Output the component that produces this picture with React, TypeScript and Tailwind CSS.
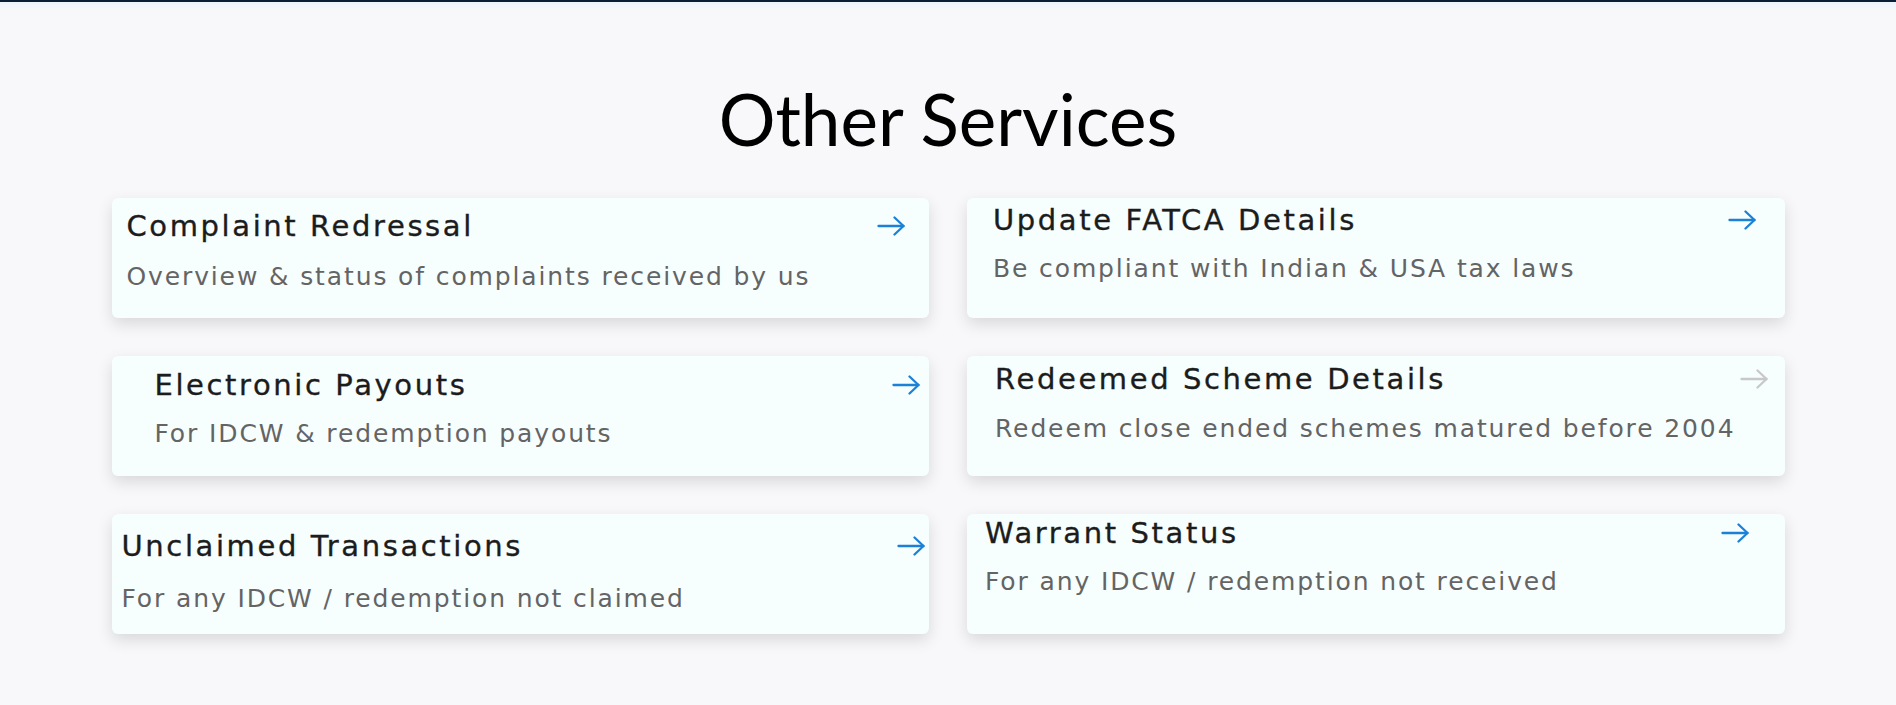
import React from "react";

type Service = {
  title: string;
  text: string;
  box: string; // padding per card, the original is not consistent
  gap: string;
  muted?: boolean;
};

const services: Service[] = [
  {
    title: "Complaint Redressal",
    text: "Overview & status of complaints received by us",
    box: "pt-[12px] pl-[15px] pr-[24px]",
    gap: "mt-[19px]",
  },
  {
    title: "Update FATCA Details",
    text: "Be compliant with Indian & USA tax laws",
    box: "pt-[6px] pl-[26px] pr-[29px]",
    gap: "mt-[17px]",
  },
  {
    title: "Electronic Payouts",
    text: "For IDCW & redemption payouts",
    box: "pt-[13px] pl-[43px] pr-[9px]",
    gap: "mt-[17px]",
  },
  {
    title: "Redeemed Scheme Details",
    text: "Redeem close ended schemes matured before 2004",
    box: "pt-[7px] pl-[28px] pr-[17px]",
    gap: "mt-[18px]",
    muted: true,
  },
  {
    title: "Unclaimed Transactions",
    text: "For any IDCW / redemption not claimed",
    box: "pt-[16px] pl-[10px] pr-[4px]",
    gap: "mt-[21px]",
  },
  {
    title: "Warrant Status",
    text: "For any IDCW / redemption not received",
    box: "pt-[3px] pl-[18px] pr-[36px]",
    gap: "mt-[17px]",
  },
];

const Arrow: React.FC<{ muted?: boolean }> = ({ muted }) => (
  <svg
    width="28"
    height="20"
    viewBox="0 0 28 20"
    fill="none"
    stroke={muted ? "#c8c8c8" : "#1b80d8"}
    strokeWidth="2.3"
    strokeLinecap="round"
    strokeLinejoin="round"
    className="shrink-0"
  >
    <path d="M1.5 10H26.5" />
    <path d="M17.5 1.5L26.5 10L17.5 18.5" />
  </svg>
);

const ServiceCard: React.FC<{ item: Service }> = ({ item }) => (
  <div
    className={`flex h-[120px] cursor-pointer flex-col rounded-md bg-[#f7fefe] shadow-[0_6px_16px_rgba(0,0,0,0.13)] ${item.box}`}
  >
    <div className="flex items-center justify-between">
      <h3 className="font-['DejaVu_Sans',sans-serif] text-[29px] leading-8 tracking-[0.09em] text-[#1c1c1c] [-webkit-text-stroke:0.35px_#1c1c1c]">
        {item.title}
      </h3>
      <Arrow muted={item.muted} />
    </div>
    <p
      className={`font-['DejaVu_Sans',sans-serif] text-[25px] leading-8 tracking-[0.075em] text-[#646464] ${item.gap}`}
    >
      {item.text}
    </p>
  </div>
);

const App: React.FC = () => {
  return (
    <div className="flex min-h-screen flex-col bg-[#f8f8fa]">
      <div className="h-[2px] bg-[#0b1f36]" />
      <div className="h-[8px] bg-gradient-to-b from-[#eef6fe] to-[#f8f8fa]" />
      <main className="flex flex-col items-center pt-[73px]">
        <h2 className="font-['Lato',sans-serif] text-[71px] leading-none text-black">
          Other Services
        </h2>
        <div className="mt-[44px] grid w-[1673px] grid-cols-2 gap-x-[38px] gap-y-[38px]">
          {services.map((item) => (
            <ServiceCard key={item.title} item={item} />
          ))}
        </div>
      </main>
    </div>
  );
};

export default App;
